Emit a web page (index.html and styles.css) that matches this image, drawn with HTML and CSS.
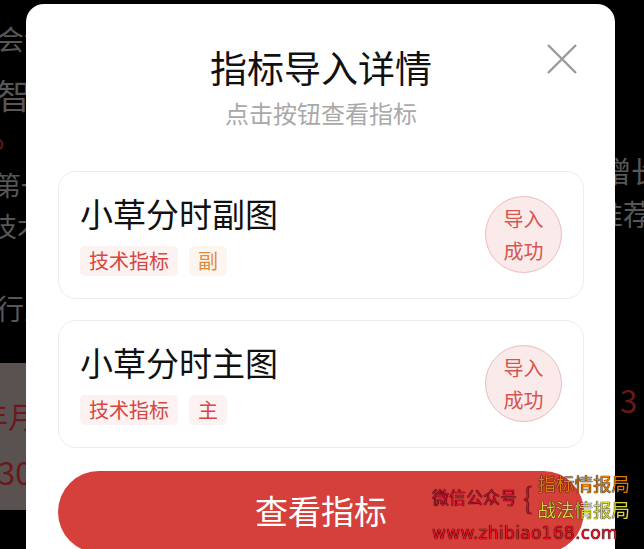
FILE: index.html
```html
<!DOCTYPE html>
<html lang="zh">
  <head>
    <title>指标导入详情</title>
    <link rel="stylesheet" href="styles.css">
  </head>
  <body>
    <div class="page">
      <div class="left-col">
        <div class="bg-line l1">会计</div>
        <div class="bg-line l2">智能</div>
        <div class="bg-line red l3">o</div>
        <div class="bg-line l4">第一</div>
        <div class="bg-line l5">技术</div>
        <div class="bg-line l6">行业</div>
        <div class="band">
          <div class="bg-line red l7">年月</div>
          <div class="bg-line red l8">30</div>
        </div>
      </div>
      <div class="right-col">
        <div class="bg-line r1">增长</div>
        <div class="bg-line r2">推荐</div>
        <div class="bg-line red r3">3</div>
      </div>
    </div>

    <div class="modal">
      <svg class="close" width="32" height="32" viewBox="0 0 32 32">
        <path d="M2 2 L30 30 M30 2 L2 30" stroke="#9a9a9a" stroke-width="2.4" fill="none"/>
      </svg>
      <h1 class="title">指标导入详情</h1>
      <p class="subtitle">点击按钮查看指标</p>

      <div class="card">
        <div class="card-info">
          <div class="card-name">小草分时副图</div>
          <div class="tags">
            <span class="tag tag-red">技术指标</span>
            <span class="tag tag-orange">副</span>
          </div>
        </div>
        <div class="badge">导入<br>成功</div>
      </div>

      <div class="card">
        <div class="card-info">
          <div class="card-name">小草分时主图</div>
          <div class="tags">
            <span class="tag tag-red">技术指标</span>
            <span class="tag tag-red">主</span>
          </div>
        </div>
        <div class="badge">导入<br>成功</div>
      </div>

      <button class="view-btn">查看指标</button>
    </div>

    <div class="watermark">
      <div class="wm-label">微信公众号</div>
      <div class="wm-brace">{</div>
      <div class="wm-names">
        <div class="wm-orange">指标情报局</div>
        <div class="wm-yellow">战法情报局</div>
      </div>
      <div class="wm-url">www.zhibiao168.com</div>
    </div>
  </body>
</html>
```

FILE: styles.css
```css
html, body {
  margin: 0;
  padding: 0;
  background: #000;
  font-family: "Noto Sans CJK SC", "Noto Sans", sans-serif;
  overflow: hidden;
}

.page {
  display: flex;
  justify-content: space-between;
  width: 644px;
  height: 549px;
}

.left-col {
  width: 40px;
  overflow: hidden;
  white-space: nowrap;
}

.right-col {
  width: 38px;
  overflow: hidden;
  white-space: nowrap;
}

.bg-line {
  color: #575757;
  line-height: 1;
}

.bg-line.red {
  color: #6a181a;
}

.l1 { font-size: 27px; margin: 25px 0 0 -3px; }
.l2 { font-size: 34px; margin: 26px 0 0 -3px; }
.l3 { font-size: 20px; margin: 20px 0 0 -8px; }
.l4 { font-size: 27px; margin: 19px 0 0 -6px; }
.l5 { font-size: 27px; margin: 14px 0 0 -10px; }
.l6 { font-size: 28px; margin: 55px 0 0 -4px; }

.band {
  margin-top: 41px;
  height: 147px;
  background: #5a5251;
  overflow: hidden;
}

.l7 { font-size: 30px; margin: 37px 0 0 -22px; }
.l8 { font-size: 31px; margin: 26px 0 0 -2px; }

.r1 { font-size: 29px; margin: 156px 0 0 -4px; }
.r2 { font-size: 29px; margin: 14px 0 0 -12px; }
.r3 { font-size: 31px; margin: 156px 0 0 14px; }

.modal {
  position: fixed;
  top: 4px;
  left: 26px;
  width: 589px;
  height: 600px;
  box-sizing: border-box;
  padding: 41px 31px 0 32px;
  background: #fff;
  border-radius: 18px;
  display: flex;
  flex-direction: column;
  align-items: stretch;
}

.close {
  position: absolute;
  top: 39px;
  right: 37px;
}

.title {
  margin: 0;
  text-align: center;
  font-size: 37px;
  line-height: 44px;
  font-weight: 400;
  color: #111;
}

.subtitle {
  margin: 9px 0 0;
  text-align: center;
  font-size: 24px;
  line-height: 30px;
  color: #a9a9a9;
}

.card {
  display: flex;
  align-items: center;
  justify-content: space-between;
  margin-top: 43px;
  padding: 21px 21px 22px 21px;
  border: 1px solid #ececec;
  border-radius: 18px;
}

.card + .card {
  margin-top: 21px;
}

.card-name {
  font-size: 33px;
  line-height: 40px;
  color: #111;
}

.tags {
  display: flex;
  gap: 11px;
  margin-top: 13px;
}

.tag {
  height: 30px;
  line-height: 30px;
  padding: 0 9px;
  font-size: 20px;
  border-radius: 5px;
}

.tag-red {
  color: #d6473f;
  background: #fdf2f2;
}

.tag-orange {
  color: #e08a3a;
  background: #fdf6ee;
}

.badge {
  width: 75px;
  height: 75px;
  border: 1px solid #ebbcbc;
  border-radius: 50%;
  background: #fbeaea;
  color: #d65550;
  font-size: 20px;
  line-height: 32px;
  display: flex;
  align-items: center;
  justify-content: center;
  text-align: center;
}

.view-btn {
  margin-top: 23px;
  height: 82px;
  border: none;
  border-radius: 41px;
  background: #d6403b;
  color: #fff;
  font-family: inherit;
  font-size: 33px;
  padding: 0 0 4px;
}

.watermark {
  position: fixed;
  left: 432px;
  top: 470px;
  width: 212px;
  display: grid;
  grid-template-columns: auto auto 1fr;
  align-items: center;
  font-family: "Noto Sans CJK SC", sans-serif;
  text-shadow: 0 0 1px #000, 0 0 1px #000;
}

.wm-label {
  color: #c8102e;
  font-size: 17px;
}

.wm-brace {
  color: #c8102e;
  font-size: 30px;
  font-weight: 200;
  padding: 0 5px 0 6px;
  line-height: 1;
}

.wm-names {
  font-size: 18.5px;
  line-height: 26px;
}

.wm-orange { color: #e07a00; }
.wm-yellow { color: #d8d83a; }

.wm-url {
  grid-column: 1 / 4;
  color: #e8101e;
  font-family: "DejaVu Sans", sans-serif;
  font-size: 17px;
  line-height: 22px;
  letter-spacing: 0.3px;
}
```
